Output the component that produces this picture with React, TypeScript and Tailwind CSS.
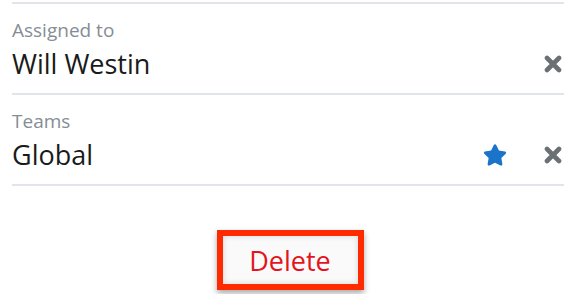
import { FaStar } from "react-icons/fa";

interface FieldProps {
  label: string;
  value: string;
  starred?: boolean;
}

function RemoveIcon() {
  return (
    <svg viewBox="0 0 18 18" className="w-[18px] h-[18px] text-[#6b7075]" aria-hidden>
      <path
        d="M3 3 L15 15 M15 3 L3 15"
        stroke="currentColor"
        strokeWidth="4.6"
        strokeLinecap="round"
        fill="none"
      />
    </svg>
  );
}

function Field({ label, value, starred }: FieldProps) {
  return (
    <div className="h-[91px] border-b-2 border-[#e1e5e9] flex flex-col">
      <div className="pt-[14px] text-[19px] leading-[24px] text-[#858d95]">{label}</div>
      <div className="flex items-center mt-[5px]">
        <div className="flex-1 text-[27px] leading-[34px] text-[#1a1a1a]">{value}</div>
        {starred && <FaStar className="text-[#1a74c9] w-[24px] h-[24px] mr-[37px]" />}
        <div className="mr-[2px]">
          <RemoveIcon />
        </div>
      </div>
    </div>
  );
}

export default function App() {
  return (
    <div className="w-[578px] h-[294px] bg-white overflow-hidden font-['Open_Sans',sans-serif]">
      <div className="ml-[12px] mr-[14px] mt-[2px] border-t-2 border-[#e1e5e9]">
        <Field label="Assigned to" value="Will Westin" />
        <Field label="Teams" value="Global" starred />
      </div>
      <div className="flex justify-center mt-[44px] pl-[2px]">
        <button className="w-[147px] h-[60px] border-[6px] border-[#ff2a00] bg-[#fafafa] shadow-[0_3px_6px_rgba(0,0,0,0.35),inset_0_0_6px_rgba(0,0,0,0.15)] text-[27px] leading-none text-[#e3141c]">
          Delete
        </button>
      </div>
    </div>
  );
}
